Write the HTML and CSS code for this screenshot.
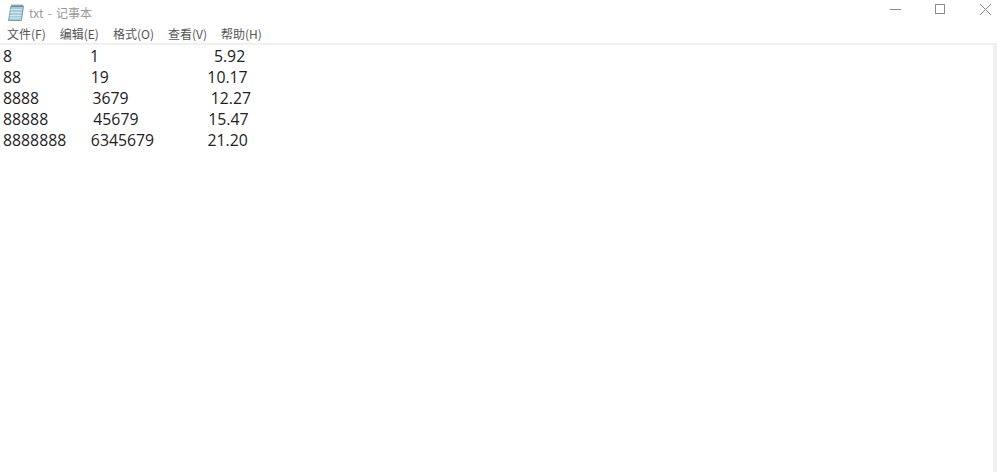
FILE: index.html
```html
<!DOCTYPE html>
<html lang="zh-CN">
<head>
  <meta charset="UTF-8" />
  <meta name="viewport" content="width=device-width, initial-scale=1.0"/>
  <title>txt - 记事本</title>
  <link rel="stylesheet" href="styles.css">
</head>
<body>
  <div class="title-bar">
    <div class="title">
      <svg class="app-icon" width="16" height="17" viewBox="0 0 16 17">
        <path d="M3 2h12.500l-2 14.500h-13z" fill="#a5cbdb" stroke="#64899b" stroke-width="0.8"/>
        <path d="M2.500 5.500h11.500M2.100 8.500h11.500M1.700 11.500h11.500M1.300 14h11.500" stroke="#d3e6ed" stroke-width="1"/>
        <path d="M4 0.500v2.500M6 0.500v2.500M8 0.500v2.500M10 0.500v2.500M12 0.500v2.500M14 0.500v2.500" stroke="#55636b" stroke-width="0.9"/>
      </svg>
      <span class="title-text">txt - 记事本</span>
    </div>
    <div class="window-buttons">
      <div class="window-button">
        <svg width="15" height="15" viewBox="0 0 15 15"><path d="M2 7.500h11" stroke="#8a8a8a" stroke-width="1"/></svg>
      </div>
      <div class="window-button">
        <svg width="15" height="15" viewBox="0 0 15 15"><rect x="2.500" y="2.500" width="9" height="9" fill="none" stroke="#8a8a8a" stroke-width="1"/></svg>
      </div>
      <div class="window-button">
        <svg width="15" height="15" viewBox="0 0 15 15"><path d="M2 2l11 11M13 2L2 13" stroke="#8a8a8a" stroke-width="1"/></svg>
      </div>
    </div>
  </div>

  <div class="menu-bar">
    <span>文件(F)</span>
    <span>编辑(E)</span>
    <span>格式(O)</span>
    <span>查看(V)</span>
    <span>帮助(H)</span>
  </div>

  <div class="editor">
    <pre class="text-area">8                   1                            5.92
88                 19                        10.17
8888             3679                    12.27
88888           45679                 15.47
8888888      6345679             21.20</pre>
    <div class="scrollbar"></div>
  </div>
</body>
</html>
```

FILE: styles.css
```css
* {
  margin: 0;
  padding: 0;
  box-sizing: border-box;
}

html, body {
  height: 100%;
}

body {
  background: #fff;
  display: flex;
  flex-direction: column;
  overflow: hidden;
  font-family: "Noto Sans CJK SC", "Noto Sans", sans-serif;
}

.title-bar {
  height: 24px;
  display: flex;
  align-items: center;
  justify-content: space-between;
  padding-left: 8px;
}

.title {
  display: flex;
  align-items: center;
  gap: 5px;
  font-size: 12px;
  color: #9a9a9a;
}

.title-text {
  word-spacing: 1.5px;
}

.window-buttons {
  display: flex;
  align-items: center;
  gap: 30px;
  padding-right: 4px;
  margin-top: -6px;
}

.window-button {
  display: flex;
}

.menu-bar {
  height: 19px;
  display: flex;
  align-items: center;
  gap: 14px;
  padding-left: 7px;
  font-size: 12px;
  color: #555;
}

.editor {
  flex: 1;
  display: flex;
  border-top: 2px solid #f0f0f0;
}

.text-area {
  flex: 1;
  padding: 1px 0 0 3px;
  font-family: "Open Sans", "Noto Sans", sans-serif;
  font-size: 15.8px;
  line-height: 21px;
  color: #222;
}

.scrollbar {
  width: 4px;
  background: #f0f0f0;
}
```
